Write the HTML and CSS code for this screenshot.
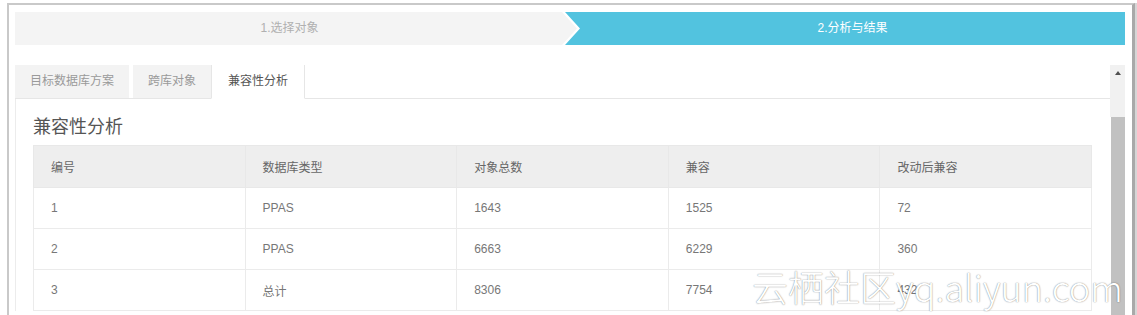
FILE: index.html
```html
<!DOCTYPE html>
<html lang="zh-CN">
<head>
    <meta charset="UTF-8">
    <meta name="viewport" content="width=device-width, initial-scale=1.0">
    <title>兼容性分析</title>
    <link rel="stylesheet" href="styles.css">
</head>
<body>
    <div class="window">
        <div class="steps">
            <div class="step">1.选择对象</div>
            <div class="step-active">
                <div class="step-active-inner">2.分析与结果</div>
            </div>
        </div>

        <div class="content">
            <div class="main">
                <ul class="tabs">
                    <li class="tab">目标数据库方案</li>
                    <li class="tab">跨库对象</li>
                    <li class="tab active">兼容性分析</li>
                </ul>
                <div class="panel">
                    <h3>兼容性分析</h3>
                    <table class="result">
                        <thead>
                            <tr>
                                <th>编号</th>
                                <th>数据库类型</th>
                                <th>对象总数</th>
                                <th>兼容</th>
                                <th>改动后兼容</th>
                            </tr>
                        </thead>
                        <tbody>
                            <tr>
                                <td>1</td>
                                <td>PPAS</td>
                                <td>1643</td>
                                <td>1525</td>
                                <td>72</td>
                            </tr>
                            <tr>
                                <td>2</td>
                                <td>PPAS</td>
                                <td>6663</td>
                                <td>6229</td>
                                <td>360</td>
                            </tr>
                            <tr>
                                <td>3</td>
                                <td>总计</td>
                                <td>8306</td>
                                <td>7754</td>
                                <td>432</td>
                            </tr>
                        </tbody>
                    </table>
                </div>
            </div>
            <div class="scrollbar">
                <div class="scroll-up"></div>
                <div class="scroll-track"></div>
                <div class="scroll-thumb"></div>
            </div>
        </div>
    </div>

    <div class="watermark">云栖社区yq.aliyun.com</div>
</body>
</html>
```

FILE: styles.css
```css
html, body {
    margin: 0;
    padding: 0;
    height: 315px;
    overflow: hidden;
    background: #ffffff;
    font-family: "Liberation Sans", Arial, "Noto Sans CJK SC", sans-serif;
}
.window {
    box-sizing: border-box;
    width: 1128px;
    height: 330px;
    margin: 3px 0 0 7px;
    padding: 7px 7px 0 6px;
    border: 2px solid #c9c9c9;
    border-right: 3px solid #a9a9a9;
    border-bottom: none;
    box-shadow: 2px 0 0 #d6d6d6;
    background: #fff;
}

/* steps */
.steps {
    display: flex;
    height: 33px;
    font-size: 12px;
    line-height: 33px;
}
.step {
    flex: 1;
    background: #f4f4f4;
    color: #b0b0b0;
    text-align: center;
    padding-right: 16px;
}
.step-active {
    flex: none;
    width: 563px;
    margin-left: -18px;
    background: #fff;
    clip-path: polygon(0 0, 100% 0, 100% 100%, 0 100%, 15px 50%);
}
.step-active-inner {
    height: 100%;
    margin-left: 3px;
    padding-left: 15px;
    background: #52c3df;
    color: #fff;
    text-align: center;
    clip-path: polygon(0 0, 100% 0, 100% 100%, 0 100%, 15px 50%);
}

/* content */
.content {
    display: flex;
    margin-top: 20px;
}
.main {
    flex: 1;
}
.tabs {
    display: flex;
    gap: 4px;
    list-style: none;
    margin: 0;
    padding: 0;
    height: 33px;
    border-bottom: 1px solid #e6e6e6;
}
.tab {
    padding: 0 15px;
    line-height: 33px;
    font-size: 12px;
    background: #f3f3f3;
    color: #9a9a9a;
}
.tab.active {
    margin-left: -4px;
    padding: 0 16px;
    height: 33px;
    background: #fff;
    color: #555;
    border: 1px solid #e6e6e6;
    border-top: none;
    border-bottom: 1px solid #fff;
}
.panel {
    border-left: 1px solid #ececec;
    padding: 16px 17px 0 17px;
}
.panel h3 {
    margin: 0 0 6px 0;
    font-size: 18px;
    line-height: 24px;
    font-weight: normal;
    color: #555;
}
.result {
    width: 1059px;
    table-layout: fixed;
    border-collapse: collapse;
    font-size: 12px;
}
.result th, .result td {
    text-align: left;
    padding: 0 0 0 17px;
    border: 1px solid #ebebeb;
}
.result th {
    height: 41px;
    background: #eeeeee;
    color: #666;
    font-weight: normal;
    border-color: #e8e8e8;
}
.result td {
    height: 40px;
    color: #777;
}

/* scrollbar */
.scrollbar {
    width: 15px;
    display: flex;
    flex-direction: column;
    height: 260px;
}
.scroll-up {
    height: 15px;
    background: #f1f1f1;
    display: flex;
    align-items: center;
    justify-content: center;
}
.scroll-up::after {
    content: "";
    border-left: 3px solid transparent;
    border-right: 3px solid transparent;
    border-bottom: 4px solid #505050;
}
.scroll-track {
    height: 37px;
    background: #f1f1f1;
}
.scroll-thumb {
    flex: 1;
    margin-left: 1px;
    background: #c1c1c1;
}

/* watermark */
.watermark {
    position: absolute;
    left: 752px;
    top: 264px;
    font-family: "Noto Sans CJK SC", "DejaVu Sans", sans-serif;
    font-size: 36px;
    line-height: 44px;
    font-weight: 300;
    color: #ffffff;
    text-shadow: 0 0 1px rgba(0, 0, 0, 0.45), 0 0 2px rgba(0, 0, 0, 0.2);
    white-space: nowrap;
}
```
